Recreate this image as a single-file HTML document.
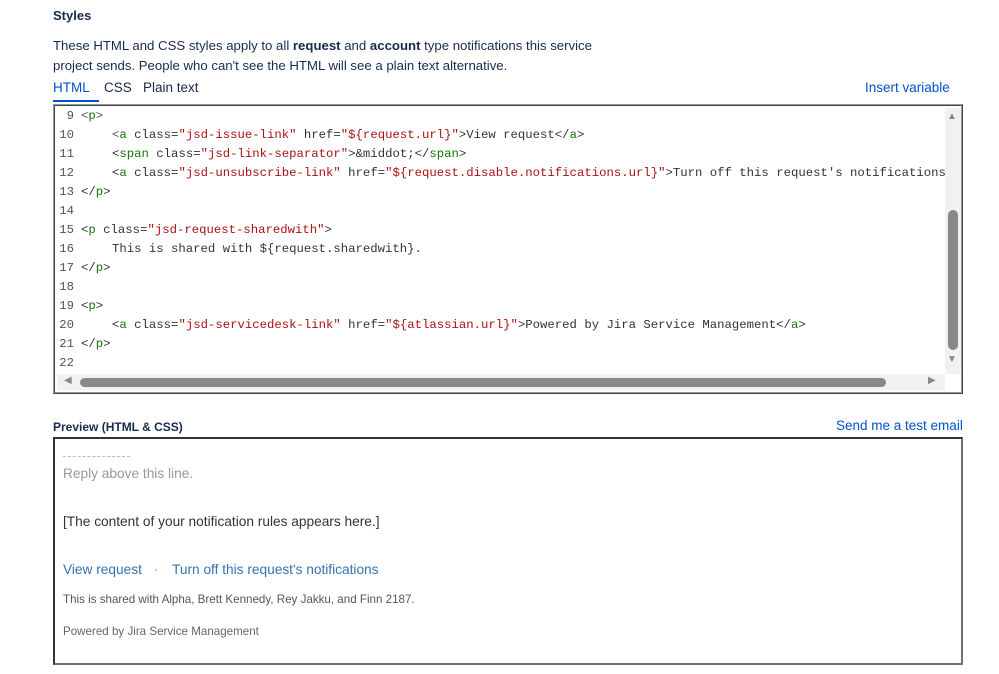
<!DOCTYPE html>
<html><head><meta charset="utf-8"><style>
body{margin:0;width:999px;height:674px;background:#fff;position:relative;font-family:"Liberation Sans",sans-serif;color:#172b4d;overflow:hidden}
.a{position:absolute;white-space:nowrap}
.code{font-family:"Liberation Mono",monospace;font-size:12.3px;color:#333}
.t{color:#117700}.b{color:#555}.s{color:#aa1111}.n{color:#555;text-align:right;width:22px}
</style></head><body>
<div class="a" style="left:53px;top:8px;font-size:13px;font-weight:bold">Styles</div>
<div class="a" style="left:53px;top:36px;font-size:13.2px;line-height:20px">These HTML and CSS styles apply to all <b>request</b> and <b>account</b> type notifications this service<br>project sends. People who can't see the HTML will see a plain text alternative.</div>
<div class="a" style="left:53px;top:80px;font-size:13.5px;color:#0052cc">HTML</div>
<div style="position:absolute;left:53px;top:100px;width:46px;height:2px;background:#0052cc"></div>
<div class="a" style="left:104px;top:80px;font-size:13.5px">CSS</div>
<div class="a" style="left:143px;top:80px;font-size:13.5px">Plain text</div>
<div class="a" style="left:865px;top:80px;font-size:13.5px;color:#0052cc">Insert variable</div>
<div style="position:absolute;left:53px;top:104px;width:906px;height:286px;border:2px solid #999;border-style:ridge;background:#fff"></div>
<div class="code">
<div class="a n" style="left:52px;top:109px">9</div><div class="a" style="left:81px;top:109px"><span class="b">&lt;</span><span class="t">p</span><span class="b">&gt;</span></div>
<div class="a n" style="left:52px;top:128px">10</div><div class="a" style="left:112px;top:128px"><span class="b">&lt;</span><span class="t">a</span> class=<span class="s">"jsd-issue-link"</span> href=<span class="s">"${request.url}"</span>&gt;View request&lt;/<span class="t">a</span>&gt;</div>
<div class="a n" style="left:52px;top:147px">11</div><div class="a" style="left:112px;top:147px">&lt;<span class="t">span</span> class=<span class="s">"jsd-link-separator"</span>&gt;&amp;middot;&lt;/<span class="t">span</span>&gt;</div>
<div class="a n" style="left:52px;top:166px">12</div><div class="a" style="left:112px;top:166px;width:833px;overflow:hidden">&lt;<span class="t">a</span> class=<span class="s">"jsd-unsubscribe-link"</span> href=<span class="s">"${request.disable.notifications.url}"</span>&gt;Turn off this request's notifications</div>
<div class="a n" style="left:52px;top:185px">13</div><div class="a" style="left:81px;top:185px">&lt;/<span class="t">p</span>&gt;</div>
<div class="a n" style="left:52px;top:204px">14</div>
<div class="a n" style="left:52px;top:223px">15</div><div class="a" style="left:81px;top:223px">&lt;<span class="t">p</span> class=<span class="s">"jsd-request-sharedwith"</span>&gt;</div>
<div class="a n" style="left:52px;top:242px">16</div><div class="a" style="left:112px;top:242px">This is shared with ${request.sharedwith}.</div>
<div class="a n" style="left:52px;top:261px">17</div><div class="a" style="left:81px;top:261px">&lt;/<span class="t">p</span>&gt;</div>
<div class="a n" style="left:52px;top:280px">18</div>
<div class="a n" style="left:52px;top:299px">19</div><div class="a" style="left:81px;top:299px">&lt;<span class="t">p</span>&gt;</div>
<div class="a n" style="left:52px;top:318px">20</div><div class="a" style="left:112px;top:318px">&lt;<span class="t">a</span> class=<span class="s">"jsd-servicedesk-link"</span> href=<span class="s">"${atlassian.url}"</span>&gt;Powered by Jira Service Management&lt;/<span class="t">a</span>&gt;</div>
<div class="a n" style="left:52px;top:337px">21</div><div class="a" style="left:81px;top:337px">&lt;/<span class="t">p</span>&gt;</div>
<div class="a n" style="left:52px;top:356px">22</div>
</div>
<div style="position:absolute;left:945px;top:108px;width:16px;height:266px;background:#f1f1f1"></div>
<div style="position:absolute;left:948px;top:210px;width:10px;height:140px;background:#888;border-radius:5px"></div>
<div class="a" style="left:947px;top:111px;font-size:10px;color:#888">▲</div>
<div class="a" style="left:947px;top:354px;font-size:10px;color:#888">▼</div>
<div style="position:absolute;left:57px;top:374px;width:888px;height:16px;background:#f1f1f1"></div>
<div style="position:absolute;left:80px;top:378px;width:806px;height:9px;background:#888;border-radius:5px"></div>
<div class="a" style="left:64px;top:375px;font-size:10px;color:#888">◀</div>
<div class="a" style="left:928px;top:375px;font-size:10px;color:#888">▶</div>
<div class="a" style="left:53px;top:420px;font-size:12px;font-weight:bold">Preview (HTML &amp; CSS)</div>
<div class="a" style="left:836px;top:418px;font-size:13.5px;color:#0052cc">Send me a test email</div>
<div style="position:absolute;left:53px;top:437px;width:906px;height:224px;border:2px solid #6b6f76;border-top-color:#333;border-left-color:#333"></div>
<div style="position:absolute;left:63px;top:456px;width:67px;border-top:1px dashed #bbb"></div>
<div class="a" style="left:63px;top:466px;font-size:13.7px;color:#999">Reply above this line.</div>
<div class="a" style="left:63px;top:514px;font-size:13.7px;color:#333">[The content of your notification rules appears here.]</div>
<div class="a" style="left:63px;top:562px;font-size:13.7px;color:#3572b0">View request</div>
<div class="a" style="left:154px;top:562px;font-size:13.7px;color:#999">·</div>
<div class="a" style="left:172px;top:562px;font-size:13.7px;color:#3572b0">Turn off this request's notifications</div>
<div class="a" style="left:63px;top:593px;font-size:11.6px;color:#555">This is shared with Alpha, Brett Kennedy, Rey Jakku, and Finn 2187.</div>
<div class="a" style="left:63px;top:625px;font-size:11.6px;color:#666">Powered by Jira Service Management</div>
</body></html>
